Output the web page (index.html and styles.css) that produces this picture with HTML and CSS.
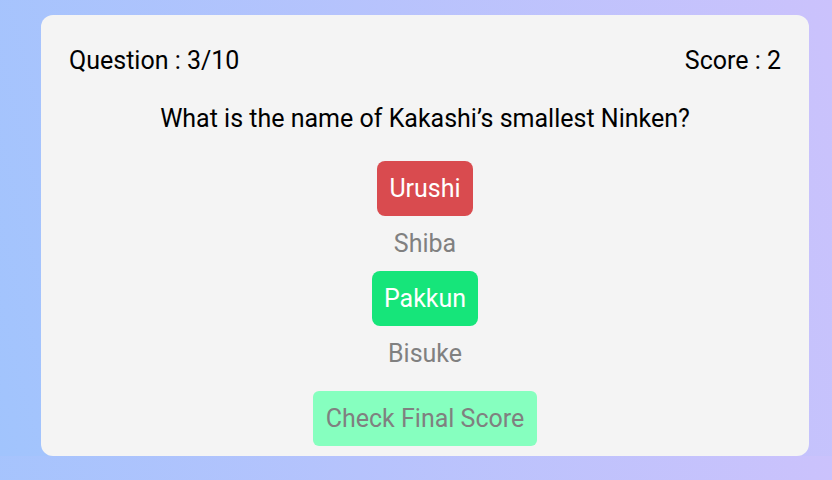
FILE: index.html
```html
<!DOCTYPE html>
<html lang="en">
<head>
<meta charset="utf-8">
<title>Quiz</title>
<link rel="stylesheet" href="styles.css">
</head>
<body>
<div class="app">
  <div class="card">
    <div class="header">
      <span>Question : 3/10</span>
      <span>Score : 2</span>
    </div>
    <div class="question">What is the name of Kakashi’s smallest Ninken?</div>
    <div class="options">
      <div class="option wrong">Urushi</div>
      <div class="option">Shiba</div>
      <div class="option correct">Pakkun</div>
      <div class="option">Bisuke</div>
    </div>
    <div class="actions">
      <button class="final">Check Final Score</button>
    </div>
  </div>
</div>
</body>
</html>
```
FILE: styles.css
```css
html, body {
  margin: 0;
  padding: 0;
}
body {
  background: linear-gradient(75deg, #a1c4fd 0%, #cbc2fc 100%);
  font-family: Roboto, "Liberation Sans", sans-serif;
}
.app {
  padding: 15px 0 0 41px;
  display: flex;
}
.card {
  width: 768px;
  height: 441px;
  box-sizing: border-box;
  background: #f4f4f4;
  border-radius: 12px;
  padding: 34px 28px 0;
}
.header {
  display: flex;
  justify-content: space-between;
  font-size: 25px;
  line-height: 24px;
  color: #000;
}
.question {
  margin-top: 34px;
  text-align: center;
  font-size: 25px;
  line-height: 24px;
  color: #000;
}
.options {
  margin-top: 30px;
  display: flex;
  flex-direction: column;
  align-items: center;
}
.option {
  font-size: 25px;
  line-height: 27px;
  padding: 14px 12px;
  color: #808080;
  border-radius: 8px;
}
.option.wrong {
  background: #d94b4f;
  color: #fff;
}
.option.correct {
  background: #16e57a;
  color: #fff;
}
.actions {
  margin-top: 10px;
  display: flex;
  justify-content: center;
}
.final {
  font-family: inherit;
  font-size: 25px;
  line-height: 27px;
  padding: 14px 13px;
  color: #808080;
  background: #86ffbf;
  border: none;
  border-radius: 6px;
}
```
